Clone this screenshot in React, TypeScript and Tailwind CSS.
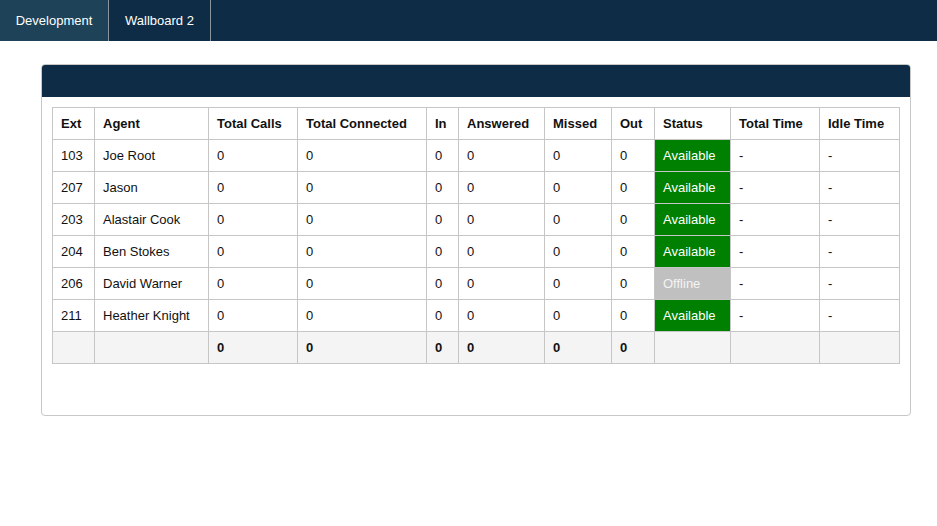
import React from "react";

interface Agent {
  ext: string;
  name: string;
  status: "Available" | "Offline";
}

const AGENTS: Agent[] = [
  { ext: "103", name: "Joe Root", status: "Available" },
  { ext: "207", name: "Jason", status: "Available" },
  { ext: "203", name: "Alastair Cook", status: "Available" },
  { ext: "204", name: "Ben Stokes", status: "Available" },
  { ext: "206", name: "David Warner", status: "Offline" },
  { ext: "211", name: "Heather Knight", status: "Available" },
];

const COLS = [
  { label: "Ext", w: "w-[42px]" },
  { label: "Agent", w: "w-[114px]" },
  { label: "Total Calls", w: "w-[89px]" },
  { label: "Total Connected", w: "w-[129px]" },
  { label: "In", w: "w-[32px]" },
  { label: "Answered", w: "w-[86px]" },
  { label: "Missed", w: "w-[67px]" },
  { label: "Out", w: "w-[43px]" },
  { label: "Status", w: "w-[76px]" },
  { label: "Total Time", w: "w-[89px]" },
  { label: "Idle Time", w: "w-[80px]" },
];

const td = "border border-[#c6c6c6] h-[32px] px-2 py-0 text-left align-middle";

export default function App() {
  return (
    <div className="min-h-[526px] bg-white text-[13px] text-[#111]" style={{ fontFamily: '"Liberation Sans", Arial, sans-serif' }}>
      {/* top tabs */}
      <div className="flex h-[41px] bg-[#0e2c45]">
        <div className="flex items-center justify-center w-[109px] bg-[#1e4359] border-r border-[#8a96a0] text-white">Development</div>
        <div className="flex items-center justify-center w-[102px] border-r border-[#8a96a0] text-white">Wallboard 2</div>
      </div>

      {/* panel */}
      <div className="ml-[41px] mt-[23px] w-[870px] h-[352px] border border-[#c8c8c8] rounded-[4px] overflow-hidden">
        <div className="h-[32px] bg-[#0e2c45]" />
        <div className="px-[10px] pt-[10px]">
          <table className="table-fixed border-collapse w-[848px]">
            <thead>
              <tr>
                {COLS.map((c) => (
                  <th key={c.label} className={`${td} ${c.w} font-bold`}>{c.label}</th>
                ))}
              </tr>
            </thead>
            <tbody>
              {AGENTS.map((a) => (
                <tr key={a.ext}>
                  <td className={td}>{a.ext}</td>
                  <td className={td}>{a.name}</td>
                  <td className={td}>0</td>
                  <td className={td}>0</td>
                  <td className={td}>0</td>
                  <td className={td}>0</td>
                  <td className={td}>0</td>
                  <td className={td}>0</td>
                  <td
                    className={`${td} ${a.status === "Available" ? "bg-[#008000] text-white" : "bg-[#c0c0c0] text-[#f4f4f4]"}`}
                  >
                    {a.status}
                  </td>
                  <td className={td}>-</td>
                  <td className={td}>-</td>
                </tr>
              ))}
              <tr className="bg-[#f4f4f4] font-bold">
                <td className={td}></td>
                <td className={td}></td>
                <td className={td}>0</td>
                <td className={td}>0</td>
                <td className={td}>0</td>
                <td className={td}>0</td>
                <td className={td}>0</td>
                <td className={td}>0</td>
                <td className={td}></td>
                <td className={td}></td>
                <td className={td}></td>
              </tr>
            </tbody>
          </table>
        </div>
      </div>
    </div>
  );
}
